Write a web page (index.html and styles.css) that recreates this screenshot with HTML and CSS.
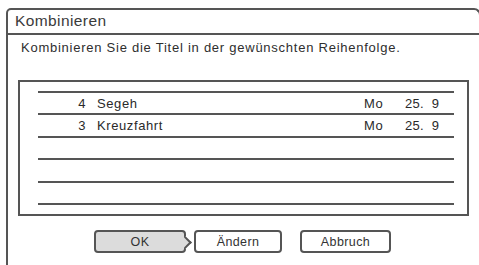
FILE: index.html
```html
<!DOCTYPE html>
<html lang="de">

<head>
    <meta charset="UTF-8">
    <meta name="viewport" content="width=device-width, initial-scale=1.0">
    <title>Kombinieren</title>
    <link rel="stylesheet" href="styles.css">
</head>

<body>
    <div class="dialog">
        <div class="titleBar">Kombinieren</div>
        <div class="content">
            <p class="hint">Kombinieren Sie die Titel in der gewünschten Reihenfolge.</p>
            <div class="listBox">
                <ul class="list">
                    <li class="row">
                        <span class="num">4</span>
                        <span class="name">Segeh</span>
                        <span class="day">Mo</span>
                        <span class="date">25.&nbsp; 9</span>
                    </li>
                    <li class="row">
                        <span class="num">3</span>
                        <span class="name">Kreuzfahrt</span>
                        <span class="day">Mo</span>
                        <span class="date">25.&nbsp; 9</span>
                    </li>
                    <li class="row"></li>
                    <li class="row"></li>
                    <li class="row"></li>
                </ul>
            </div>
            <div class="buttons">
                <button class="btn btn-ok active">OK</button>
                <button class="btn btn-edit">Ändern</button>
                <button class="btn btn-cancel">Abbruch</button>
            </div>
        </div>
    </div>
</body>

</html>
```

FILE: styles.css
```css
* {
    margin: 0;
    padding: 0;
    box-sizing: border-box;
}

html,
body {
    height: 265px;
    overflow: hidden;
    background: white;
}

body {
    font-family: 'Liberation Sans', Arial, sans-serif;
    color: #333;
}

/* dialog runs off the bottom of the screen, so no bottom border */
.dialog {
    margin: 8px 0 0 6px;
    width: 475px;
    height: 257px;
    border: 2px solid #555;
    border-bottom: none;
    border-radius: 5px 7px 0 0;
}

.titleBar {
    height: 25px;
    border-bottom: 2px solid #555;
    font-size: 15.5px;
    letter-spacing: 0.4px;
    line-height: 22px;
    padding-left: 7px;
    color: #3a3a3a;
}

.hint {
    font-size: 13px;
    letter-spacing: 0.75px;
    line-height: 16px;
    padding: 5px 0 0 13px;
    height: 45px;
    color: #2e2e2e;
}

.listBox {
    margin: 0 10px;
    height: 136px;
    border: 2px solid #555;
    padding: 9px 13px 0 18px;
}

.list {
    list-style: none;
    border-top: 2px solid #555;
}

.row {
    display: flex;
    align-items: center;
    height: 22.4px;
    border-bottom: 2px solid #555;
    font-size: 13px;
    letter-spacing: 0.6px;
    color: #2a2a2a;
}

.num {
    width: 48px;
    text-align: right;
}

.name {
    margin-left: 11px;
    flex: 1;
}

.day {
    width: 41px;
}

.date {
    width: 49px;
    letter-spacing: 0.3px;
}

.buttons {
    display: flex;
    justify-content: center;
    padding-top: 14px;
    padding-right: 2px;
}

.btn {
    position: relative;
    height: 23px;
    border: 2px solid #555;
    border-radius: 4px;
    background: white;
    font-family: 'Liberation Sans', Arial, sans-serif;
    font-size: 12.5px;
    letter-spacing: 0.4px;
    color: #333;
}

.btn-ok {
    width: 92px;
}

.btn-edit {
    width: 88px;
    margin-left: 8px;
}

.btn-cancel {
    width: 91px;
    margin-left: 18px;
}

.btn.active {
    background: #dcdcdc;
}

.btn.active::after {
    content: "";
    position: absolute;
    right: -6px;
    top: 50%;
    width: 7px;
    height: 7px;
    margin-top: -4px;
    background: #dcdcdc;
    border-top: 2px solid #555;
    border-right: 2px solid #555;
    transform: rotate(45deg);
}
```
